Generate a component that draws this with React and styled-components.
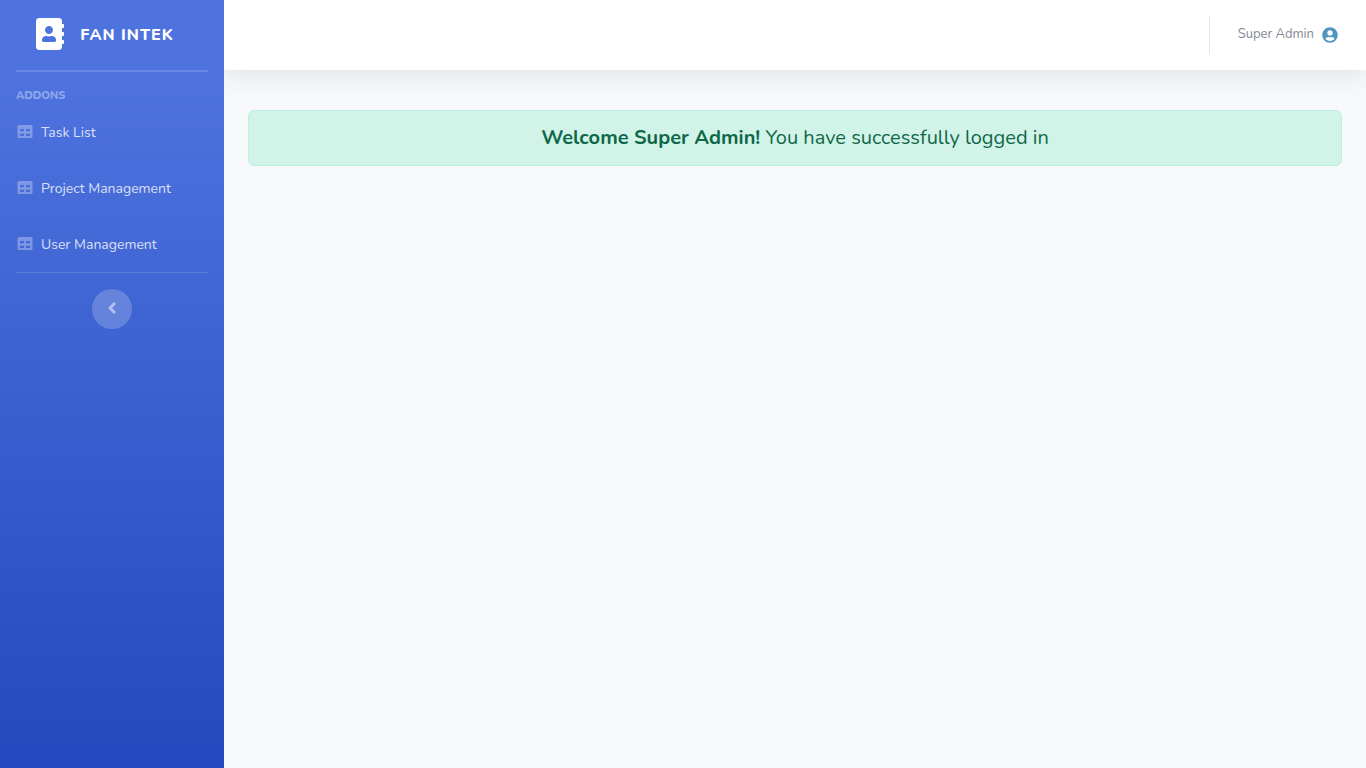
import React from "react";
import styled, { createGlobalStyle } from "styled-components";
import { FaAddressBook, FaAngleLeft, FaUserCircle } from "react-icons/fa";

const GlobalStyle = createGlobalStyle`
  *, *::before, *::after { box-sizing: border-box; }
  body {
    margin: 0;
    background: #f8f9fc;
    color: #858796;
    font-family: Nunito, Lato, "Open Sans", sans-serif;
    font-size: 16px;
    line-height: 24px;
  }
`;

const Page = styled.div`
  display: flex;
  min-height: 100vh;
`;

const Sidebar = styled.nav`
  position: relative;
  z-index: 1;
  flex: none;
  display: flex;
  flex-direction: column;
  width: 224px;
  background: linear-gradient(180deg, #4e73df 10%, #224abe 100%);
`;

const Brand = styled.a`
  display: flex;
  align-items: center;
  justify-content: center;
  height: 70px;
  padding: 0 16px 2px;
  color: #fff;
  font-size: 16px;
  font-weight: 800;
  letter-spacing: 1px;
  text-transform: uppercase;
  text-decoration: none;

  svg {
    width: 28px;
    height: 32px;
  }
`;

const BrandText = styled.span`
  margin: 0 14px 0 16px;
  padding-top: 2px;
`;

const Divider = styled.hr`
  width: 192px;
  height: ${(p) => (p.$thick ? 2 : 1)}px;
  margin: 0 16px 16px;
  border: 0;
  background: rgba(255, 255, 255, 0.15);
`;

const Heading = styled.div`
  padding: 0 16px;
  color: rgba(255, 255, 255, 0.4);
  font-size: 11px;
  line-height: 16px;
  font-weight: 800;
  text-transform: uppercase;
`;

const Menu = styled.ul`
  margin: 0;
  padding: 0;
  list-style: none;
`;

const MenuLink = styled.a`
  display: flex;
  align-items: center;
  gap: 8px;
  height: 56px;
  padding: 2px 16px 0;
  color: rgba(255, 255, 255, 0.8);
  font-size: 14px;
  text-decoration: none;

  svg {
    width: 17px;
    height: 16px;
    color: rgba(255, 255, 255, 0.3);
  }
`;

const Toggle = styled.button`
  display: flex;
  align-items: center;
  justify-content: center;
  align-self: center;
  width: 40px;
  height: 40px;
  padding: 0 1px 2px 0;
  border: 0;
  border-radius: 50%;
  background: rgba(255, 255, 255, 0.2);
  color: rgba(255, 255, 255, 0.5);
  cursor: pointer;
`;

const Content = styled.div`
  flex: 1;
  min-width: 0;
`;

const Topbar = styled.header`
  display: flex;
  align-items: center;
  justify-content: flex-end;
  height: 70px;
  padding: 0 28px;
  background: #fff;
  box-shadow: 0 2px 28px rgba(58, 59, 69, 0.15);
`;

const Separator = styled.div`
  width: 1px;
  height: 38px;
  margin-right: 28px;
  background: #e3e6f0;
`;

const UserLink = styled.a`
  display: flex;
  align-items: center;
  gap: 8px;
  color: #858796;
  font-size: 13px;
  text-decoration: none;

  span { padding-bottom: 2px; }
  svg { color: #5295bf; }
`;

const Main = styled.main`
  padding: 40px 24px;
`;

const Alert = styled.div`
  padding: 12px 20px;
  border: 1px solid #bff0de;
  border-radius: 6px;
  background: #d2f4e8;
  color: #0f6848;
  font-size: 20px;
  line-height: 30px;
  text-align: center;

  strong { font-weight: 700; }
`;

function TableIcon() {
  return (
    <svg viewBox="0 0 17 16" fill="currentColor" aria-hidden="true">
      <path
        fillRule="evenodd"
        d="M2.8 0h12.4a1.3 1.3 0 0 1 1.3 1.3v10.4a1.3 1.3 0 0 1-1.3 1.3H2.8a1.3 1.3 0 0 1-1.3-1.3V1.3A1.3 1.3 0 0 1 2.8 0zM4 4v2.2h4V4zM10 4v2.2h4V4zM4 8.7v2.2h4V8.7zM10 8.7v2.2h4V8.7z"
      />
    </svg>
  );
}

const items = ["Task List", "Project Management", "User Management"];

export default function App() {
  return (
    <Page>
      <GlobalStyle />
      <Sidebar>
        <Brand href="#">
          <FaAddressBook />
          <BrandText>Fan Intek</BrandText>
        </Brand>
        <Divider $thick />
        <Heading>Addons</Heading>
        <Menu>
          {items.map((label) => (
            <li key={label}>
              <MenuLink href="#">
                <TableIcon />
                <span>{label}</span>
              </MenuLink>
            </li>
          ))}
        </Menu>
        <Divider />
        <Toggle type="button" aria-label="Collapse sidebar">
          <FaAngleLeft size={18} />
        </Toggle>
      </Sidebar>
      <Content>
        <Topbar>
          <Separator />
          <UserLink href="#">
            <span>Super Admin</span>
            <FaUserCircle size={16} />
          </UserLink>
        </Topbar>
        <Main>
          <Alert role="alert">
            <strong>Welcome Super Admin!</strong> You have successfully logged in
          </Alert>
        </Main>
      </Content>
    </Page>
  );
}
